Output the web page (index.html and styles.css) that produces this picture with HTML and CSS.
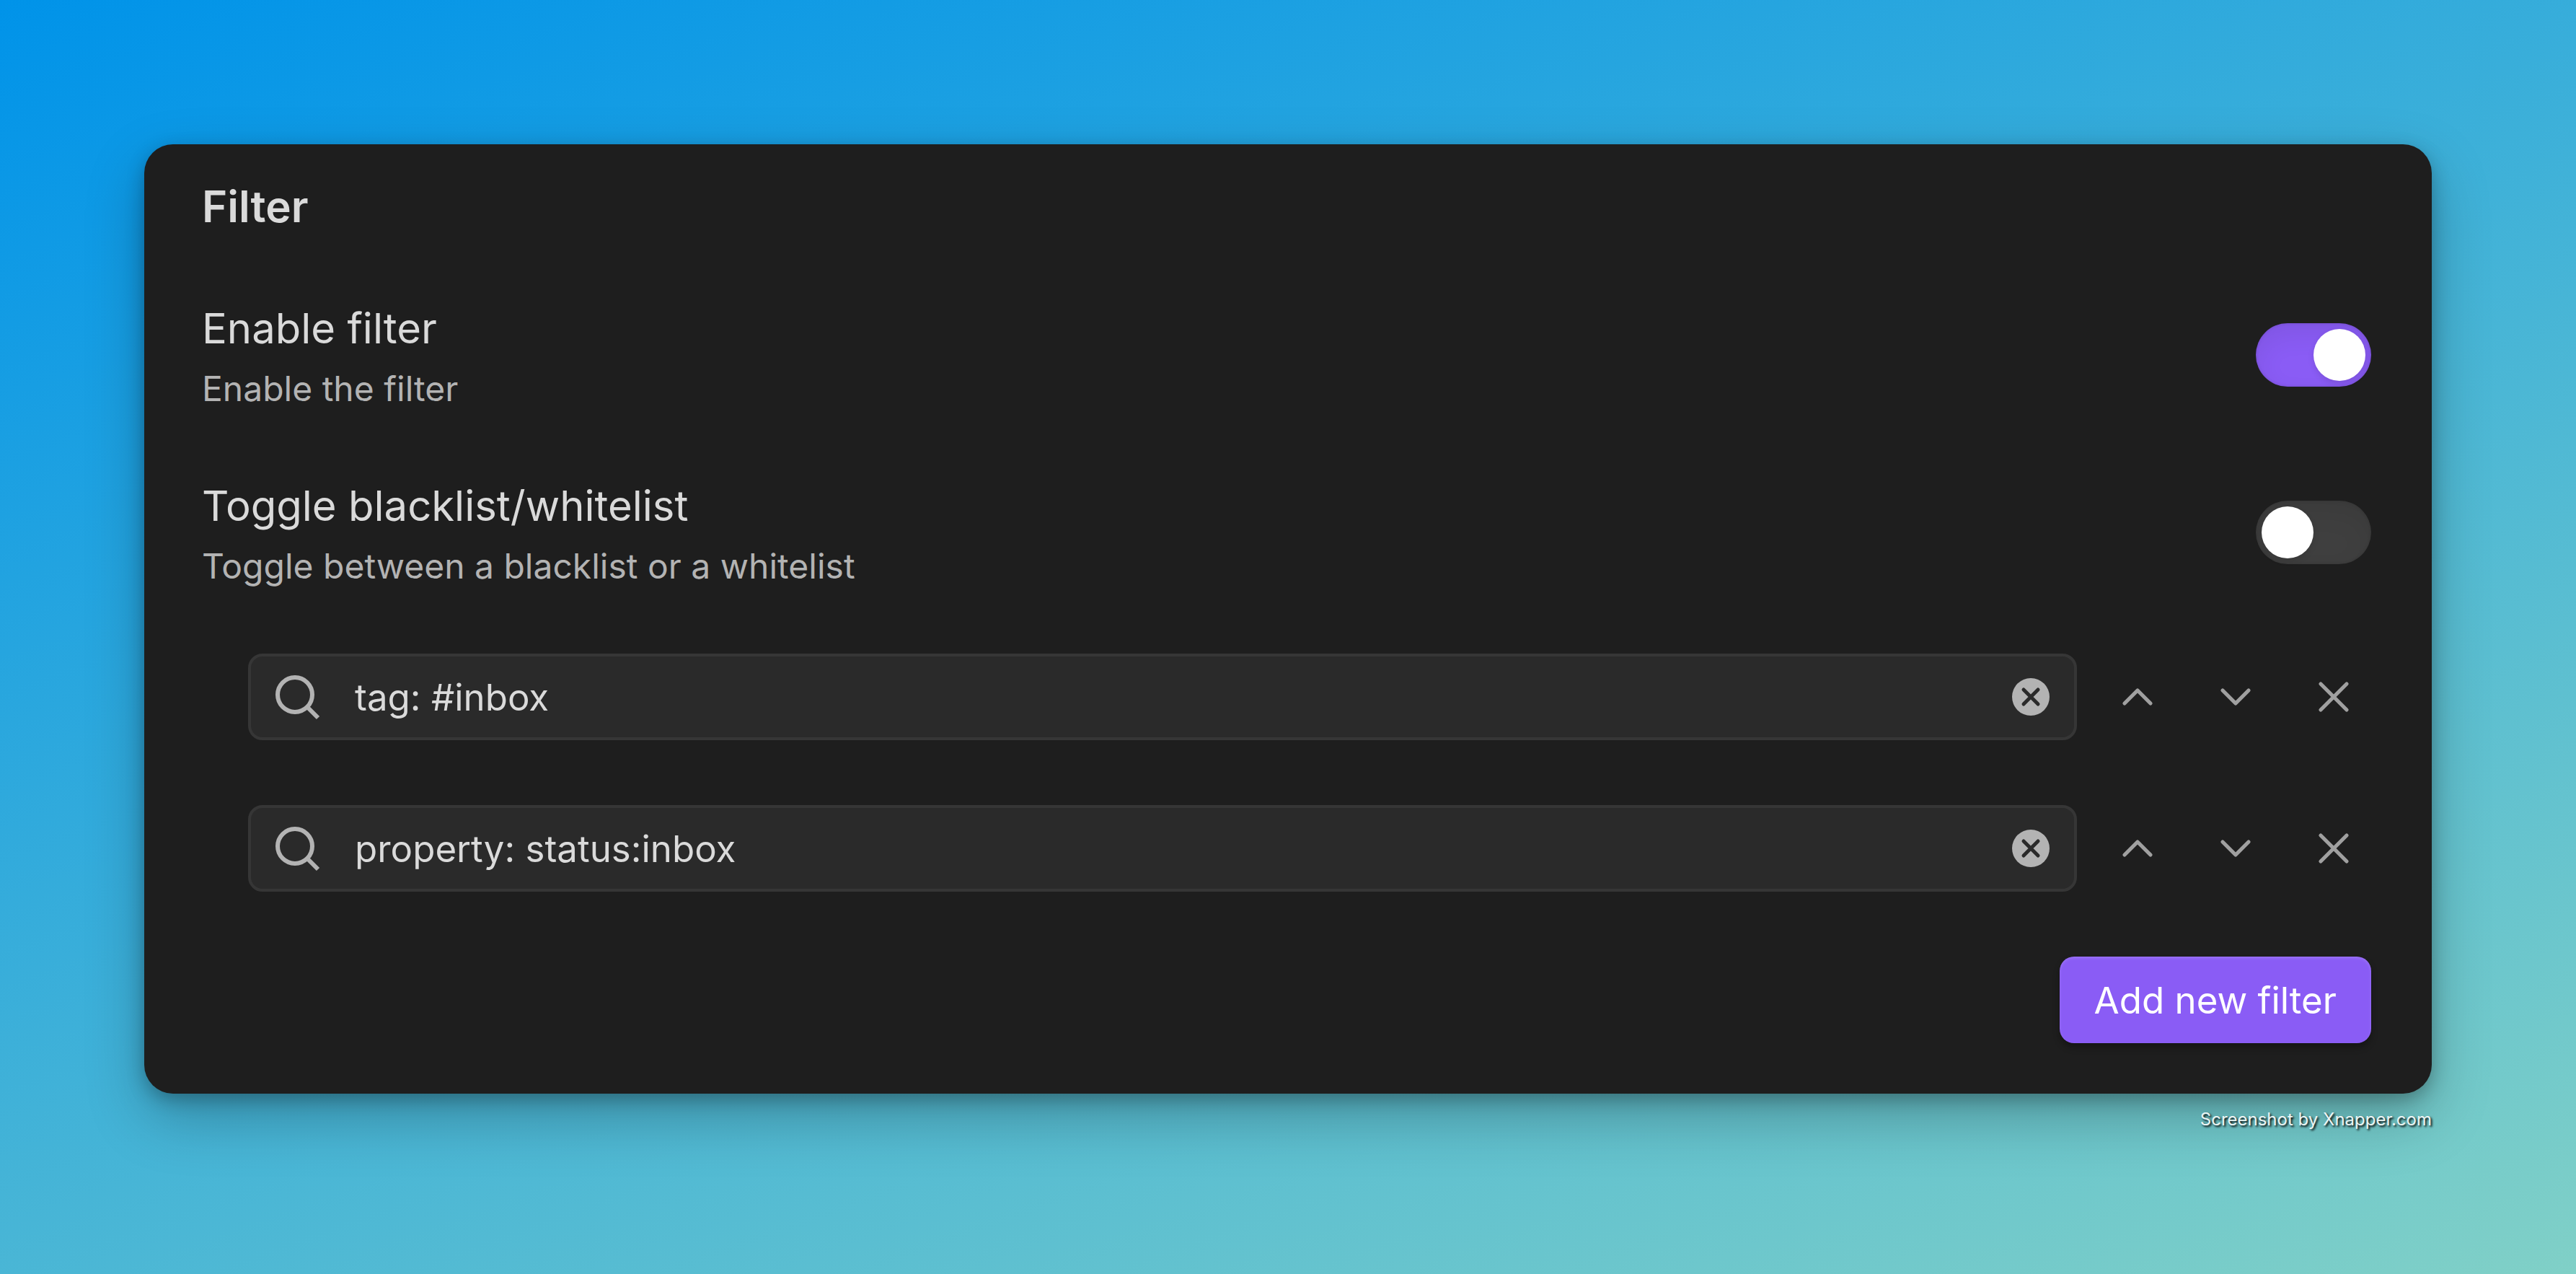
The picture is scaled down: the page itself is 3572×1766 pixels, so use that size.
FILE: index.html
```html
<!DOCTYPE html>
<html lang="en">
<head>
<meta charset="utf-8">
<title>Filter settings</title>
<link rel="stylesheet" href="styles.css">
</head>
<body>
<svg class="sprite" aria-hidden="true">
  <symbol id="icon-search" viewBox="0 0 72 72"><circle cx="33" cy="33" r="24"/><path d="M49.500 49.500L65 65"/></symbol>
  <symbol id="icon-up" viewBox="0 0 24 24"><path d="m18 15-6-6-6 6"/></symbol>
  <symbol id="icon-down" viewBox="0 0 24 24"><path d="m6 9 6 6 6-6"/></symbol>
  <symbol id="icon-cross" viewBox="0 0 24 24"><path d="M18 6 6 18M6 6l12 12"/></symbol>
  <symbol id="icon-clear" viewBox="0 0 52 52"><circle class="disc" cx="26" cy="26" r="26"/><path class="mark" d="M16 16l20 20M36 16l-20 20"/></symbol>
</svg>
<main class="card">
  <h2 class="heading">Filter</h2>
  <div class="setting">
    <div class="info">
      <label class="name" for="enable">Enable filter</label>
      <p class="desc" id="enable-desc">Enable the filter</p>
    </div>
    <input class="toggle" type="checkbox" id="enable" aria-describedby="enable-desc" checked>
  </div>
  <div class="setting">
    <div class="info">
      <label class="name" for="mode">Toggle blacklist/whitelist</label>
      <p class="desc" id="mode-desc">Toggle between a blacklist or a whitelist</p>
    </div>
    <input class="toggle" type="checkbox" id="mode" aria-describedby="mode-desc">
  </div>
  <div class="filter">
    <div class="search">
      <svg class="icon lens" aria-hidden="true"><use href="#icon-search"/></svg>
      <input class="field" type="text" value="tag: #inbox" aria-label="Filter 1" spellcheck="false">
      <button class="clear" type="button" aria-label="Clear"><svg aria-hidden="true"><use href="#icon-clear"/></svg></button>
    </div>
    <button class="action" type="button" aria-label="Move up"><svg class="icon" aria-hidden="true"><use href="#icon-up"/></svg></button>
    <button class="action" type="button" aria-label="Move down"><svg class="icon" aria-hidden="true"><use href="#icon-down"/></svg></button>
    <button class="action" type="button" aria-label="Delete"><svg class="icon" aria-hidden="true"><use href="#icon-cross"/></svg></button>
  </div>
  <div class="filter">
    <div class="search">
      <svg class="icon lens" aria-hidden="true"><use href="#icon-search"/></svg>
      <input class="field" type="text" value="property: status:inbox" aria-label="Filter 2" spellcheck="false">
      <button class="clear" type="button" aria-label="Clear"><svg aria-hidden="true"><use href="#icon-clear"/></svg></button>
    </div>
    <button class="action" type="button" aria-label="Move up"><svg class="icon" aria-hidden="true"><use href="#icon-up"/></svg></button>
    <button class="action" type="button" aria-label="Move down"><svg class="icon" aria-hidden="true"><use href="#icon-down"/></svg></button>
    <button class="action" type="button" aria-label="Delete"><svg class="icon" aria-hidden="true"><use href="#icon-cross"/></svg></button>
  </div>
  <div class="footer">
    <button class="add" type="button">Add new filter</button>
  </div>
</main>
<p class="credit">Screenshot by Xnapper.com</p>
</body>
</html>
```
FILE: styles.css
```css
* {
  box-sizing: border-box;
}

body {
  margin: 0;
  min-height: 100vh;
  padding: 200px 200px 0;
  background: linear-gradient(160deg, #0093e9 0%, #80d0c7 100%) no-repeat;
  color: #dadada;
  font-family: Inter, "Liberation Sans", sans-serif;
}

button {
  padding: 0;
  border: 0;
  background: none;
  color: inherit;
  font: inherit;
}

.sprite {
  display: none;
}

.card {
  padding: 46px 84px 25px 80px;
  border-radius: 40px;
  background: #1e1e1e;
  box-shadow: 0 32px 80px rgba(0, 0, 0, 0.25), 0 8px 24px rgba(0, 0, 0, 0.25);
}

.heading {
  margin: 0 0 43px;
  font-size: 60px;
  font-weight: 600;
  line-height: 80px;
}

.setting {
  display: flex;
  align-items: center;
  justify-content: space-between;
  padding: 46px 0;
}

.info {
  display: flex;
  flex-direction: column;
  gap: 14px;
}

.name {
  font-size: 58px;
  line-height: 80px;
}

.desc {
  margin: 0;
  color: #b3b3b3;
  font-size: 48px;
  line-height: 60px;
}

.toggle {
  appearance: none;
  display: flex;
  width: 160px;
  height: 88px;
  margin: 0;
  padding: 8px;
  border-radius: 44px;
  background: #3f3f3f;
  box-shadow: inset 0 16px 36px rgba(0, 0, 0, 0.07), inset 0 0 4px rgba(0, 0, 0, 0.15);
}

.toggle::before {
  content: "";
  width: 72px;
  height: 72px;
  border-radius: 50%;
  background: #fff;
  box-shadow: 0 4px 8px rgba(0, 0, 0, 0.1);
}

.toggle:checked {
  justify-content: flex-end;
  background: #8a5cf5;
}

.filter {
  display: flex;
  align-items: center;
  gap: 32px;
  padding: 45px 0 45px 64px;
}

.search {
  position: relative;
  flex: 1;
}

.field {
  display: block;
  width: 100%;
  height: 120px;
  padding: 0 120px 0 144px;
  border: 4px solid #363636;
  border-radius: 20px;
  background: #2a2a2a;
  color: #dadada;
  font: 51px Inter, "Liberation Sans", sans-serif;
}

.icon {
  display: block;
  width: 72px;
  height: 72px;
  fill: none;
  stroke: #a0a0a0;
  stroke-width: 1.75;
  stroke-linecap: round;
  stroke-linejoin: round;
}

.lens {
  position: absolute;
  top: 24px;
  left: 32px;
  stroke: #b3b3b3;
  stroke-width: 6;
  stroke-linecap: butt;
}

.clear {
  position: absolute;
  top: 34px;
  right: 38px;
  width: 52px;
  height: 52px;
}

.clear svg {
  display: block;
  width: 52px;
  height: 52px;
}

.disc {
  fill: #b3b3b3;
}

.mark {
  stroke: #2a2a2a;
  stroke-width: 5;
  stroke-linecap: round;
}

.action {
  padding: 16px;
}

.footer {
  display: flex;
  justify-content: flex-end;
  padding: 45px 0;
}

.add {
  height: 120px;
  padding: 0 48px;
  border-radius: 20px;
  background: #8a5cf5;
  box-shadow: inset 0 2px 4px rgba(255, 255, 255, 0.15), 0 6px 10px rgba(0, 0, 0, 0.3);
  color: #fff;
  font-size: 51px;
}

.credit {
  margin: 20px 0 0;
  color: #eaf5f5;
  font-size: 24px;
  line-height: 32px;
  text-align: right;
  text-shadow: 2px 2px 3px #000;
}
```
